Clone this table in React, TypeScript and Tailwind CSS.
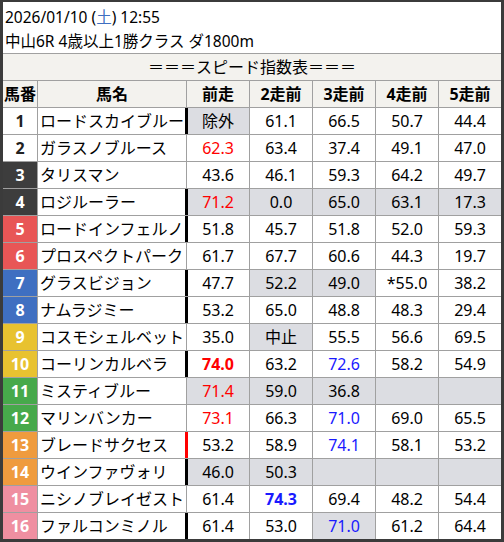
import React from 'react';

type Cell = { v: string; c?: 'r' | 'b'; bold?: boolean; g?: boolean };

const waku: Record<number, string> = {
  1: 'bg-white text-[#222]',
  2: 'bg-white text-[#222]',
  3: 'bg-[#3d3d3d] text-white',
  4: 'bg-[#3d3d3d] text-white',
  5: 'bg-[#e85656] text-white',
  6: 'bg-[#e85656] text-white',
  7: 'bg-[#3f6fc1] text-white',
  8: 'bg-[#3f6fc1] text-white',
  9: 'bg-[#e8c230] text-white',
  10: 'bg-[#e8c230] text-white',
  11: 'bg-[#47a94b] text-white',
  12: 'bg-[#47a94b] text-white',
  13: 'bg-[#ef9b3e] text-white',
  14: 'bg-[#ef9b3e] text-white',
  15: 'bg-[#ef8fa1] text-white',
  16: 'bg-[#ef8fa1] text-white',
};

const c = (v: string, o: Partial<Cell> = {}): Cell => ({ v, ...o });

const rows: { n: number; name: string; mark?: 'k' | 'r'; cells: Cell[] }[] = [
  { n: 1, name: 'ロードスカイブルー', mark: 'k', cells: [c('除外', { g: true }), c('61.1'), c('66.5'), c('50.7'), c('44.4')] },
  { n: 2, name: 'ガラスノブルース', cells: [c('62.3', { c: 'r' }), c('63.4'), c('37.4'), c('49.1'), c('47.0')] },
  { n: 3, name: 'タリスマン', cells: [c('43.6'), c('46.1'), c('59.3'), c('64.2'), c('49.7')] },
  { n: 4, name: 'ロジルーラー', mark: 'k', cells: [c('71.2', { c: 'r', g: true }), c('0.0', { g: true }), c('65.0', { g: true }), c('63.1', { g: true }), c('17.3', { g: true })] },
  { n: 5, name: 'ロードインフェルノ', mark: 'k', cells: [c('51.8'), c('45.7'), c('51.8'), c('52.0'), c('59.3')] },
  { n: 6, name: 'プロスペクトパーク', cells: [c('61.7'), c('67.7'), c('60.6'), c('44.3'), c('19.7')] },
  { n: 7, name: 'グラスビジョン', mark: 'k', cells: [c('47.7'), c('52.2', { g: true }), c('49.0', { g: true }), c('*55.0'), c('38.2')] },
  { n: 8, name: 'ナムラジミー', mark: 'k', cells: [c('53.2'), c('65.0'), c('48.8'), c('48.3'), c('29.4')] },
  { n: 9, name: 'コスモシェルベット', cells: [c('35.0'), c('中止', { g: true }), c('55.5'), c('56.6'), c('69.5')] },
  { n: 10, name: 'コーリンカルベラ', mark: 'k', cells: [c('74.0', { c: 'r', bold: true }), c('63.2'), c('72.6', { c: 'b' }), c('58.2'), c('54.9')] },
  { n: 11, name: 'ミスティブルー', cells: [c('71.4', { c: 'r', g: true }), c('59.0', { g: true }), c('36.8', { g: true }), c('', { g: true }), c('', { g: true })] },
  { n: 12, name: 'マリンバンカー', cells: [c('73.1', { c: 'r' }), c('66.3'), c('71.0', { c: 'b' }), c('69.0'), c('65.5')] },
  { n: 13, name: 'ブレードサクセス', mark: 'r', cells: [c('53.2'), c('58.9'), c('74.1', { c: 'b' }), c('58.1'), c('53.2')] },
  { n: 14, name: 'ウインファヴォリ', mark: 'k', cells: [c('46.0', { g: true }), c('50.3', { g: true }), c('', { g: true }), c('', { g: true }), c('', { g: true })] },
  { n: 15, name: 'ニシノブレイゼスト', cells: [c('61.4'), c('74.3', { c: 'b', bold: true }), c('69.4'), c('48.2'), c('54.4')] },
  { n: 16, name: 'ファルコンミノル', mark: 'k', cells: [c('61.4'), c('53.0'), c('71.0', { c: 'b', g: true }), c('61.2'), c('64.4')] },
];

const heads = ['馬番', '馬名', '前走', '2走前', '3走前', '4走前', '5走前'];

export default function App() {
  return (
    <div
      className="w-[504px] h-[542px] bg-white border-[#3b3b3b] border-t-2 border-x-[3px] border-b-[3px] text-black text-[16px]"
      style={{ fontFamily: '"Noto Sans", "Noto Sans CJK JP", sans-serif' }}
    >
      {/* race info */}
      <div className="h-[51px] pt-[3px] pl-[2px] leading-[24px] text-[15.5px]">
        <div>
          2026/01/10 (<span className="text-[#3f6fc1]">土</span>) 12:55
        </div>
        <div>中山6R 4歳以上1勝クラス ダ1800m</div>
      </div>

      <div className="h-[28px] border-y border-[#a0a0a0] bg-[#f3f2ee] flex items-center justify-center leading-none">
        ＝＝＝スピード指数表＝＝＝
      </div>

      {/* table */}
      <div className="grid grid-cols-[34px_148px_repeat(5,62px)] auto-rows-[26px] gap-px bg-[#a0a0a0]">
        {heads.map((h) => (
          <div key={h} className="bg-[#f3f2ee] font-bold flex items-center justify-center leading-none">
            {h}
          </div>
        ))}

        {rows.map((r) => (
          <React.Fragment key={r.n}>
            <div className={`${waku[r.n]} font-bold flex items-center justify-center leading-none`}>{r.n}</div>
            <div className="bg-white flex items-center pl-[2px] whitespace-nowrap leading-none">{r.name}</div>
            {r.cells.map((cell, i) => (
              <div
                key={i}
                className={[
                  'flex items-center justify-center leading-none',
                  cell.g ? 'bg-[#dcdde2]' : 'bg-white',
                  cell.c === 'r' ? 'text-[#ff0000]' : cell.c === 'b' ? 'text-[#1a1aff]' : '',
                  cell.bold ? 'font-bold' : '',
                  i === 0 && r.mark === 'k' ? 'shadow-[-2px_0_0_#000,inset_1px_0_0_#000]' : '',
                  i === 0 && r.mark === 'r' ? 'shadow-[-2px_0_0_#ff0000,inset_1px_0_0_#ff0000]' : '',
                ].join(' ')}
              >
                {cell.v}
              </div>
            ))}
          </React.Fragment>
        ))}
      </div>
    </div>
  );
}
